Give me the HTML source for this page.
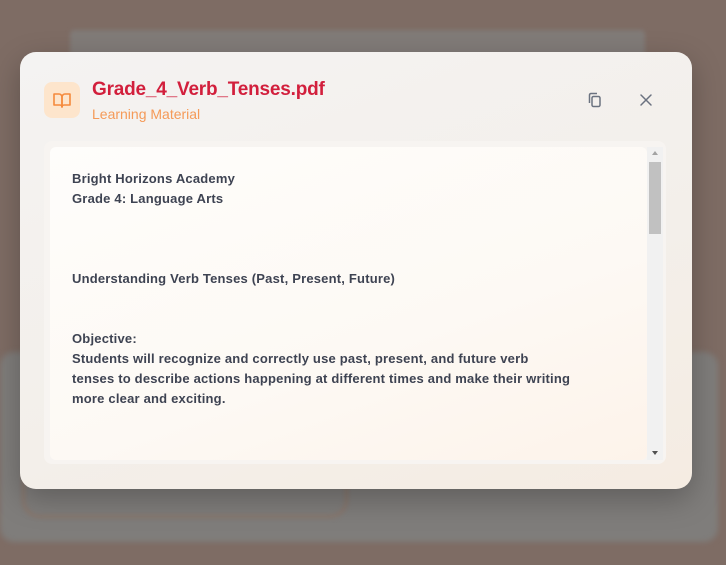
<!DOCTYPE html>
<html><head><meta charset="utf-8"><style>
html,body{margin:0;padding:0;width:726px;height:565px;overflow:hidden;background:#7e6c64;font-family:"Liberation Sans","DejaVu Sans",sans-serif;}
.bgpanel{position:absolute;left:0;top:352px;width:718px;height:190px;background:#7f7d7b;border-radius:14px;filter:blur(3px);}
.bginput{position:absolute;left:70px;top:30px;width:575px;height:36px;background:#817b78;border-radius:4px;filter:blur(2px);}
.bgbtn{position:absolute;left:22px;top:460px;width:326px;height:58px;border:3px solid #8a766b;border-radius:18px;box-sizing:border-box;filter:blur(2px);}
.modal{position:absolute;left:20px;top:52px;width:672px;height:437px;border-radius:16px;background:linear-gradient(160deg,#f4f3f2 0%,#f3efea 60%,#f5ece2 100%);box-shadow:0 10px 30px rgba(0,0,0,.25);}
.icon{position:absolute;left:24px;top:30px;width:36px;height:36px;border-radius:8px;background:#fde5cc;}
.title{position:absolute;left:72px;top:27px;font-size:19px;font-weight:bold;color:#d21f3c;letter-spacing:-0.2px;}
.sub{position:absolute;left:72px;top:54px;font-size:14px;color:#f59a58;}
.box{position:absolute;left:24px;top:89px;width:622px;height:323px;border-radius:8px;background:#f7f4f1;}
.inner{position:absolute;left:6px;top:6px;width:597px;height:313px;border-radius:6px;background:linear-gradient(160deg,#fefdfb 0%,#fdf9f4 60%,#fdf3ea 100%);}
.sb{position:absolute;left:603px;top:6px;width:16px;height:313px;background:#f1f1f1;}
.thumb{position:absolute;left:2px;top:15px;width:12px;height:72px;background:#c1c1c1;}
.text{position:absolute;left:22px;top:22px;font-size:13px;line-height:20px;color:#3e4352;white-space:pre;font-weight:bold;letter-spacing:0.2px;}
</style></head><body>
<div class="bginput"></div>
<div class="bgpanel"></div>
<div class="bgbtn"></div>
<div class="modal">
 <div class="icon"><svg width="36" height="36" viewBox="0 0 36 36" fill="none" stroke="#f58a3c" stroke-width="1.6" stroke-linejoin="round"><path d="M10 12h5a3 3 0 0 1 3 3v10a2 2 0 0 0-2-2h-6z"/><path d="M26 12h-5a3 3 0 0 0-3 3v10a2 2 0 0 1 2-2h6z"/></svg></div>
 <div class="title">Grade_4_Verb_Tenses.pdf</div>
 <div class="sub">Learning Material</div>
 <svg style="position:absolute;left:565px;top:38px" width="20" height="20" viewBox="0 0 20 20" fill="none" stroke="#6b7280" stroke-width="1.5"><rect x="7" y="6.5" width="8" height="10" rx="1.5"/><path d="M4.5 13V5a1.5 1.5 0 0 1 1.5-1.5H12"/></svg>
 <svg style="position:absolute;left:617px;top:39px" width="18" height="18" viewBox="0 0 18 18" fill="none" stroke="#6b7280" stroke-width="1.5" stroke-linecap="round"><path d="M4 4l10 10M14 4L4 14"/></svg>
 <div class="box">
  <div class="inner"><div class="text">Bright Horizons Academy
Grade 4: Language Arts



Understanding Verb Tenses (Past, Present, Future)


Objective:
Students will recognize and correctly use past, present, and future verb
tenses to describe actions happening at different times and make their writing
more clear and exciting.</div></div>
  <div class="sb"><div class="thumb"></div>
   <div style="position:absolute;left:5px;top:4px;width:0;height:0;border-left:3px solid transparent;border-right:3px solid transparent;border-bottom:4px solid #a3a3a3"></div>
   <div style="position:absolute;left:5px;top:304px;width:0;height:0;border-left:3px solid transparent;border-right:3px solid transparent;border-top:4px solid #505050"></div>
  </div>
 </div>
</div>
</body></html>
